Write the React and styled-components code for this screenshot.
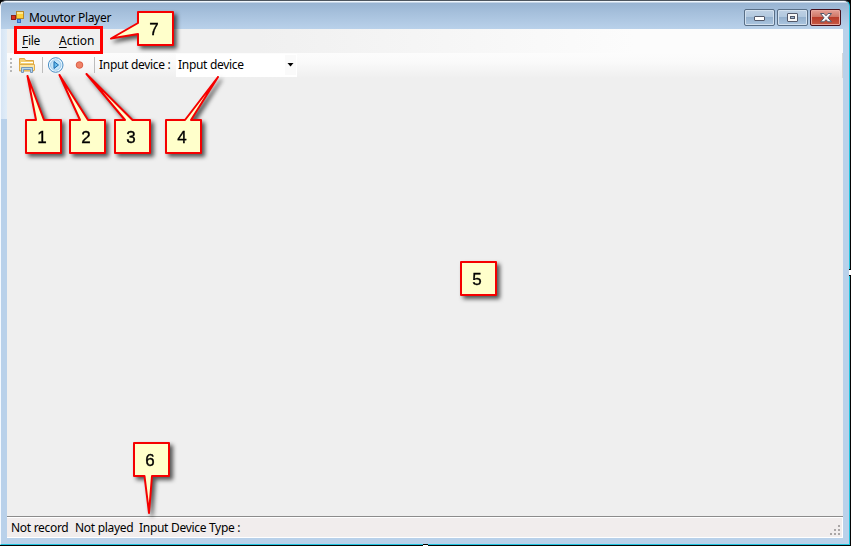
import React from "react";
import styled, { createGlobalStyle } from "styled-components";

const GlobalStyle = createGlobalStyle`
  * { box-sizing: border-box; }
  body { margin: 0; overflow: hidden; background: #000; }
`;

const Desktop = styled.div`
  position: relative;
  width: 851px;
  height: 546px;
  padding: 0 1px 1px 0;
  background: #050505;
  font: 12px/16px "Noto Sans", "Open Sans", sans-serif;
  color: #000;
`;

const Window = styled.div`
  display: flex;
  flex-direction: column;
  width: 850px;
  height: 545px;
  padding: 0 6px 6px 6px;
  border: 1px solid #f4f9ff;
  border-top-color: #4d565f;
  border-right-color: #20c4df;
  border-bottom-color: #20c4df;
  border-radius: 6px 6px 0 0;
  background:
    linear-gradient(90deg, #d7e5f4, #e1edf8) 0 28px / 6px 90px no-repeat,
    linear-gradient(#f0f6fc 0 1px, #98b4d2 2px, #a6c0dc 12px, #b9d1ea 28px, #b9d1ea);
`;

const TitleBar = styled.header`
  display: flex;
  flex: 0 0 28px;
  align-items: flex-start;
  padding: 8px 0 0 4px;
`;

const AppIcon = styled.svg`
  flex: none;
  width: 14px;
  height: 14px;
  margin-top: 1px;
`;

const Label = styled.span`
  display: block;
  flex: none;
  width: ${(p) => p.$width}px;
  letter-spacing: ${(p) => p.$spacing ?? -0.3}px;
  font-size: 12px;
  line-height: 16px;
  white-space: nowrap;
  &::first-letter {
    text-decoration: ${(p) => (p.$mnemonic ? "underline" : "none")};
    text-underline-offset: 2px;
  }
`;

const TitleText = styled(Label)`
  margin: 1px 0 0 4px;
`;

const WindowControls = styled.div`
  display: flex;
  gap: 2px;
  margin-left: auto;
  margin-right: 2px;
`;

const ControlButton = styled.button`
  display: grid;
  place-items: center;
  width: 31px;
  height: 17px;
  padding: 0;
  border: 1px solid ${(p) => (p.$danger ? "#48101b" : "#586e86")};
  border-radius: 2px;
  box-shadow: inset 0 0 0 1px ${(p) => (p.$danger ? "#e9a79d" : "#d3e1ef")};
  background: ${(p) =>
    p.$danger
      ? "linear-gradient(#e4a095, #cf7666 46%, #b83b29 48%, #c75a45)"
      : "linear-gradient(#bfd1e4, #b1c8df 46%, #94b0cd 48%, #abc5df)"};
  svg { display: block; }
`;

const Client = styled.main`
  display: flex;
  flex: 1;
  flex-direction: column;
  min-height: 0;
  background: #efefef;
`;

const MenuBar = styled.nav`
  display: flex;
  flex: 0 0 24px;
  align-items: flex-start;
  gap: 17px;
  padding: 4px 0 0 15px;
  background: linear-gradient(90deg, #f0f0f0, #f0f0f0 30%, #fcfcfc 75%);
`;

const ToolBar = styled.div`
  display: flex;
  flex: 0 0 25px;
  align-items: flex-start;
  padding: 4px 0 0 2px;
  border-right: 1px solid #d8d8d8;
  background: linear-gradient(#fcfcfc, #fafafa 35%, #efefef);
`;

const Grip = styled.div`
  width: 2px;
  height: 15px;
  margin: 1px 7px 0 1px;
  background: repeating-linear-gradient(#b8b8b8 0 2px, transparent 2px 4px);
`;

const ToolIcon = styled.svg`
  flex: none;
  display: block;
  width: 16px;
  height: 16px;
`;

const RecordIcon = styled(ToolIcon)`
  margin-left: 8px;
`;

const Separator = styled.div`
  width: 1px;
  height: 16px;
  margin: 0 ${(p) => p.$after}px 0 ${(p) => p.$before}px;
  background: #bdbdbd;
`;

const Combo = styled.div`
  display: flex;
  width: 121px;
  height: 23px;
  margin: -3px 0 0 4px;
  padding: 3px 0 0 2px;
  background: #fff;
`;

const ComboArrow = styled.div`
  display: grid;
  place-items: center;
  width: 11px;
  height: 20px;
  margin: -2px 1px 0 auto;
  background: #fafafa;
`;

const Canvas = styled.section`
  flex: 1;
  border-bottom: 1px solid #8c8c8c;
`;

const StatusBar = styled.footer`
  display: flex;
  flex: 0 0 21px;
  align-items: flex-start;
  padding: 2px 1px 0 4px;
  border: 1px solid #fff;
  border-width: 1px 1px 1px 0;
  background: #f1eded;
`;

const ResizeGrip = styled.svg`
  width: 12px;
  height: 12px;
  margin: 4px 0 0 auto;
`;

const Annotations = styled.div`
  position: absolute;
  inset: 0;
  pointer-events: none;
`;

const Highlight = styled.div`
  position: absolute;
  left: 14px;
  top: 26px;
  width: 89px;
  height: 28px;
  border: 3px solid #f00;
`;

const CalloutShape = styled.svg`
  position: absolute;
  left: ${(p) => p.$x}px;
  top: ${(p) => p.$y}px;
  width: 37px;
  height: 36px;
  overflow: visible;
  filter: drop-shadow(3px 3px 2px rgba(0, 0, 0, 0.65));
  path { fill: #ffffcb; stroke: #f50000; stroke-width: 2; stroke-linejoin: round; }
  text {
    font: 17px "Liberation Sans", Arial, sans-serif;
    fill: #000;
    stroke: #000;
    stroke-width: 0.35px;
    text-anchor: middle;
  }
`;

const ResizeHandle = styled.i`
  position: absolute;
  left: ${(p) => p.$x}px;
  top: ${(p) => p.$y}px;
  width: ${(p) => p.$w}px;
  height: ${(p) => p.$h}px;
  border: solid #000;
  border-width: ${(p) => (p.$w > p.$h ? "1px 0 0" : "1px 0")};
  background: #fff;
`;

const callouts = [
  { n: 1, x: 25, y: 119, d: "M1 1H11L2.5 -43L19 1H36V34H1Z" },
  { n: 2, x: 69, y: 119, d: "M1 1H11L-9.5 -44L19 1H36V34H1Z" },
  { n: 3, x: 114, y: 119, d: "M1 1H11L-27.5 -45L18.5 1H36V34H1Z" },
  { n: 4, x: 165, y: 119, d: "M1 1H20L53 -42L26 1H36V34H1Z" },
  { n: 5, x: 460, y: 261, d: "M1 1H36V34H1Z" },
  { n: 6, x: 133, y: 442, d: "M1 1H36V34H19L16 71L11.5 34H1Z" },
  { n: 7, x: 137, y: 11, d: "M1 1H36V34H1V23L-26 27.5L1 12Z" },
];

function Callout({ n, x, y, d }) {
  return (
    <CalloutShape $x={x} $y={y}>
      <path d={d} />
      <text x="17" y="24">{n}</text>
    </CalloutShape>
  );
}

export default function App() {
  return (
    <>
      <GlobalStyle />
      <Desktop>
        <Window>
          <TitleBar>
            <AppIcon viewBox="0 0 14 14">
              <rect x="5.5" y="1.5" width="7" height="7" fill="#ffd13b" stroke="#b8892b" />
              <path d="M6 2h6v2H6z" fill="#ffe991" />
              <rect x=".5" y="5.5" width="4" height="4" fill="#d8321d" stroke="#8d2118" />
              <rect x="6.5" y="9.5" width="3" height="3" fill="#5d9af0" stroke="#326ac5" />
            </AppIcon>
            <TitleText $width={82}>Mouvtor Player</TitleText>
            <WindowControls>
              <ControlButton aria-label="Minimize">
                <svg width="12" height="6" viewBox="0 0 12 6"><rect x=".5" y="1.5" width="10" height="4" rx=".5" fill="#fff" stroke="#53596a" /></svg>
              </ControlButton>
              <ControlButton aria-label="Maximize">
                <svg width="12" height="10" viewBox="0 0 12 10"><rect x=".5" y=".5" width="10" height="8" rx=".5" fill="#f7f7f7" stroke="#53596a" /><rect x="3.5" y="3.5" width="4" height="2" fill="#9fb7d0" stroke="#53596a" /></svg>
              </ControlButton>
              <ControlButton $danger aria-label="Close">
                <svg width="12" height="10" viewBox="0 0 12 10"><path d="M.5.5H4L6 2.8 8 .5h3.5L8 4.8l3.5 4H8L6 6.7 4 8.8H.5L4 4.8Z" fill="#f7f7f7" stroke="#53596a" /></svg>
              </ControlButton>
            </WindowControls>
          </TitleBar>
          <Client>
            <MenuBar>
              <Label $mnemonic $width={20}>File</Label>
              <Label $mnemonic $width={38} $spacing={0}>Action</Label>
            </MenuBar>
            <ToolBar>
              <Grip />
              <ToolIcon viewBox="0 0 16 16">
                <path d="M.5 14V1.5h5l1 2h8V14Z" fill="#f3cf70" stroke="#dca544" />
                <path d="M2 5h12v1H2z" fill="#fff" />
                <path d="M1 7h14v6H1z" fill="#ffe7a0" />
                <path d="M.5 13.5v-6h15v6" fill="none" stroke="#e0ad4c" />
                <path d="M2.5 15.5v-5h11v5h-2v-3h-7v3Z" fill="#b5d7ed" stroke="#7797b8" />
              </ToolIcon>
              <Separator $before={7} $after={5} />
              <ToolIcon viewBox="0 0 16 16">
                <circle cx="7.7" cy="8" r="7.3" fill="#e7f6ff" stroke="#4a8fc5" />
                <circle cx="7.7" cy="8" r="5.2" fill="#c4e6fa" stroke="#a3cceb" />
                <path d="M6 4.5l4.5 3.5L6 11.5Z" fill="#67bded" stroke="#1969ad" />
              </ToolIcon>
              <RecordIcon viewBox="0 0 16 16">
                <circle cx="7.5" cy="8" r="3.3" fill="#ef8368" stroke="#dc5e45" />
              </RecordIcon>
              <Separator $before={6} $after={4} />
              <Label $width={73}>Input device :</Label>
              <Combo>
                <Label $width={68}>Input device</Label>
                <ComboArrow>
                  <svg width="7" height="4" viewBox="0 0 7 4"><path d="M.5 0h6L3.5 3.5Z" /></svg>
                </ComboArrow>
              </Combo>
            </ToolBar>
            <Canvas />
            <StatusBar>
              <Label $width={64}>Not record</Label>
              <Label $width={64}>Not played</Label>
              <Label $width={110}>Input Device Type :</Label>
              <ResizeGrip viewBox="0 0 12 12">
                <path d="M9 1h2v2H9zM5 5h2v2H5zM9 5h2v2H9zM1 9h2v2H1zM5 9h2v2H5zM9 9h2v2H9z" fill="#aaa6a6" />
              </ResizeGrip>
            </StatusBar>
          </Client>
        </Window>
        <Annotations>
          <Highlight />
          {callouts.map((item) => <Callout key={item.n} {...item} />)}
          <ResizeHandle $x={849} $y={269} $w={2} $h={7} />
          <ResizeHandle $x={423} $y={544} $w={5} $h={2} />
        </Annotations>
      </Desktop>
    </>
  );
}
